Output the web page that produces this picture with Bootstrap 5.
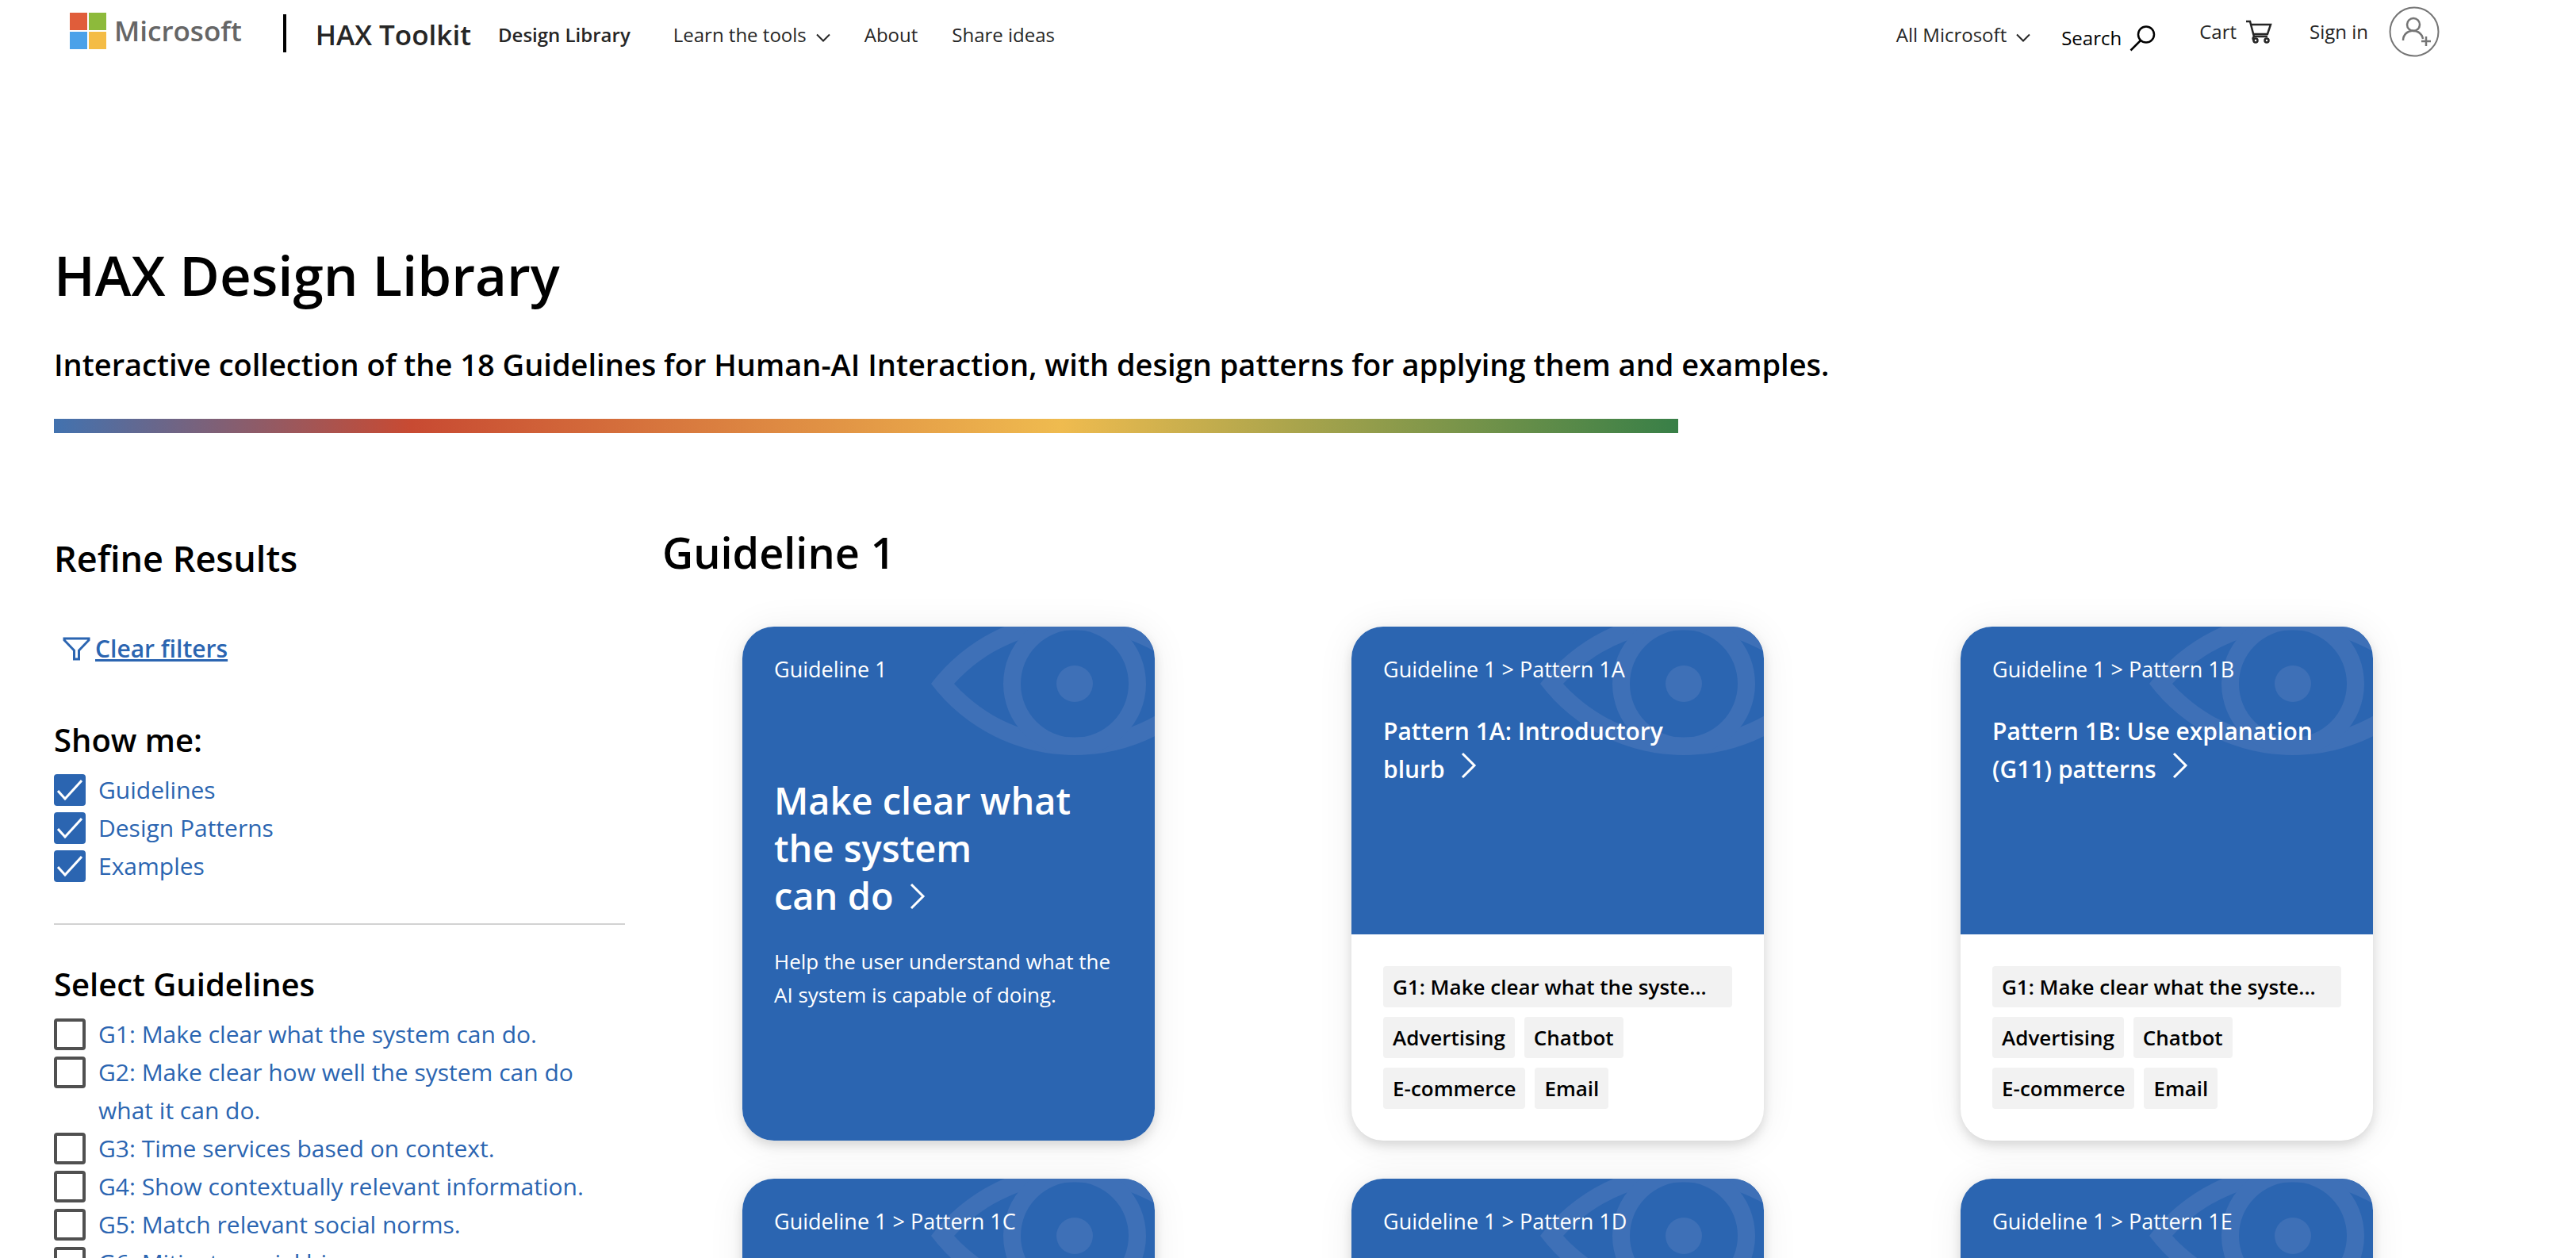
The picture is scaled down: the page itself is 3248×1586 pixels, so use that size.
<!DOCTYPE html>
<html lang="en">
<head>
<meta charset="utf-8">
<meta name="viewport" content="width=device-width, initial-scale=1">
<title>HAX Design Library</title>
<link href="https://cdn.jsdelivr.net/npm/bootstrap@5.3.0/dist/css/bootstrap.min.css" rel="stylesheet">
<style>
  :root { --hax-blue: #2b65b1; }
  html { overflow-x: hidden; }
  body { font-family: "Open Sans", "Noto Sans", sans-serif; font-size: 26px; color: #000; background: #fff; }
  a { color: inherit; text-decoration: none; }
  svg { flex: none; display: block; }
  h1, h2, h3, p { margin: 0; }

  /* header */
  .top-bar { height: 88px; padding: 0 172px 0 88px; color: #262626; font-size: 24px; line-height: 36px; }
  .ms-logo { gap: 10px; padding-bottom: 10px; color: #666; font-size: 35px; font-weight: 600; }
  .bar-rule { width: 4px; height: 48px; margin: 0 37px 4px 52px; background: #000; }
  .site-name { font-size: 35px; font-weight: 600; margin-right: 34px; }
  .main-links { gap: 43px; }
  .main-links .current { font-weight: 600; margin-right: 11px; }
  .search-btn { gap: 10px; margin-left: 39px; padding: 8px 0 0; color: #000; background: none; border: 0; }
  .account-links { gap: 46px; margin-left: 55px; padding-bottom: 8px; }
  .sign-in { gap: 26px; }

  /* intro */
  .page-body { padding: 0 132px 0 68px; }
  .page-title { margin-top: 213px; font-size: 69px; line-height: 90px; font-weight: 600; }
  .page-intro { margin-top: 40px; font-size: 38px; line-height: 56px; font-weight: 600; }
  .rainbow { max-width: 2048px; height: 18px; margin-top: 41px;
    background: linear-gradient(90deg, #4272af 0, #c84a32 22%, #efbb4f 62%, #387f47 100%); }

  /* filters */
  .content-row { margin-top: 114px; gap: 24px; }
  .filters { flex: 0 0 720px; padding-top: 14px; }
  .filters h2 { font-size: 45px; line-height: 60px; font-weight: 600; }
  .filters h3 { font-size: 40px; line-height: 52px; font-weight: 600; margin-bottom: 13px; }
  .clear-link { margin: 64px 0 69px 11px; gap: 6px; font-size: 30px; line-height: 40px; font-weight: 600; color: var(--hax-blue); }
  .filters hr { margin: 48px 0 49px; border-top: 2px solid #d2d2d2; opacity: 1; }
  .filter-row { gap: 16px; color: var(--hax-blue); font-size: 30px; line-height: 48px; }
  .filter-row .form-check-input { flex: none; width: 40px; height: 40px; margin: 4px 0; border: 4px solid #505050; border-radius: 4px; background-color: #fff; }
  .filter-row .form-check-input:checked { border-color: var(--hax-blue); background-color: var(--hax-blue); background-size: 32px 32px;
    background-image: url("data:image/svg+xml,%3csvg xmlns='http://www.w3.org/2000/svg' viewBox='0 0 32 32'%3e%3cpath d='M1 17l9 10L31 4' fill='none' stroke='%23fff' stroke-width='3'/%3e%3c/svg%3e"); }

  /* cards */
  .results > h2 { padding-left: 23px; margin-bottom: 58px; font-size: 54px; line-height: 72px; font-weight: 600; }
  .card-grid { row-gap: 48px; }
  .hax-card { width: 520px; height: 648px; border: 0; border-radius: 40px; overflow: hidden;
    box-shadow: 0 6px 14px rgba(0,0,0,.13), 0 2px 48px rgba(0,0,0,.07); }
  .card-face { position: relative; padding: 36px 40px; color: #fff; background: var(--hax-blue); }
  .pattern-face { height: 388px; }
  .eye-mark { position: absolute; top: 0; right: 0; }
  .crumb { position: relative; font-size: 27px; line-height: 36px; }
  .big-title { margin-top: 117px; font-size: 47px; line-height: 60px; font-weight: 600; }
  .face-text { margin-top: 32px; line-height: 42px; }
  .pattern-title { position: relative; margin-top: 36px; font-size: 30px; line-height: 48px; font-weight: 600; }
  .go-arrow { display: inline; margin-left: 20px; vertical-align: baseline; }
  .pattern-title .go-arrow { vertical-align: -1px; }
  .tag-list { padding: 40px; gap: 12px; }
  .hax-tag { padding: 0 12px; border-radius: 4px; background: #f2f2f2; font-size: 26px; line-height: 52px; font-weight: 600; }
</style>
</head>
<body>
<svg width="0" height="0" class="position-absolute" aria-hidden="true">
  <symbol id="eye" viewBox="0 0 282 162">
    <g fill="#3e70b7" fill-rule="evenodd">
      <path d="M0 72A227 227 0 0 1 362 72A227 227 0 0 1 0 72ZM29 72A205 205 0 0 0 333 72A205 205 0 0 0 29 72Z"/>
      <path d="M91 72a90 90 0 1 0 180 0a90 90 0 1 0 -180 0ZM113 72a68 68 0 1 1 136 0a68 68 0 1 1 -136 0Z"/>
      <circle cx="181" cy="72" r="23"/>
    </g>
  </symbol>
  <symbol id="arrow" viewBox="0 0 20 34"><path d="M2 2l15 15L2 32" fill="none" stroke="currentColor" stroke-width="3"/></symbol>
  <symbol id="down" viewBox="0 0 18 12"><path d="M1 1.500l8 8 8-8" fill="none" stroke="currentColor" stroke-width="2"/></symbol>
</svg>

<header class="top-bar d-flex align-items-center">
  <a href="#" class="ms-logo d-flex align-items-center">
    <svg width="46" height="46" viewBox="0 0 46 46"><path fill="#e05d3a" d="M0 0h22v22H0z"/><path fill="#8dba3b" d="M24 0h22v22H24z"/><path fill="#4aa1e9" d="M0 24h22v22H0z"/><path fill="#f4bc45" d="M24 24h22v22H24z"/></svg>
    Microsoft
  </a>
  <span class="bar-rule"></span>
  <a href="#" class="site-name">HAX Toolkit</a>
  <nav class="main-links d-flex align-items-center">
    <a href="#" class="current">Design Library</a>
    <a href="#" class="d-flex align-items-center gap-2">Learn the tools
      <svg width="18" height="12" class="ms-1 mt-2"><use href="#down"/></svg></a>
    <a href="#">About</a>
    <a href="#">Share ideas</a>
  </nav>
  <a href="#" class="ms-auto d-flex align-items-center gap-2">All Microsoft
    <svg width="18" height="12" class="ms-1 mt-2"><use href="#down"/></svg></a>
  <button type="button" class="search-btn d-flex align-items-center">Search
    <svg width="33" height="33" viewBox="0 0 33 33" fill="none" stroke="currentColor" stroke-width="2.500"><circle cx="21" cy="11.500" r="10"/><path d="M14 19L1.500 31.500"/></svg></button>
  <div class="account-links d-flex align-items-center">
    <a href="#" class="d-flex align-items-center gap-2">Cart
      <svg width="34" height="30" viewBox="0 0 34 30" class="ms-1" fill="none" stroke="currentColor" stroke-width="2.500"><path d="M0 2h5l5 19h17M6 6h25l-4 12H9M11 21c-3 1-3 3-1 5"/><circle cx="12" cy="26" r="2.500"/><circle cx="26" cy="26" r="2.500"/></svg></a>
    <a href="#" class="sign-in d-flex align-items-center">Sign in
      <svg width="64" height="64" viewBox="0 0 64 64" fill="none" stroke="#757575" stroke-width="2"><circle cx="32" cy="32" r="30.500"/><g stroke-width="2.500"><circle cx="31" cy="23" r="8"/><path d="M18 43c0-15 22-17 25-2M47 38v12M41 44h12"/></g></svg></a>
  </div>
</header>

<div class="page-body">
  <h1 class="page-title">HAX Design Library</h1>
  <p class="page-intro">Interactive collection of the 18 Guidelines for Human-AI Interaction, with design patterns for applying them and examples.</p>
  <div class="rainbow"></div>

  <div class="content-row d-flex align-items-start">
    <aside class="filters">
      <h2>Refine Results</h2>
      <a href="#" class="clear-link d-flex align-items-center">
        <svg width="35" height="30" viewBox="0 0 35 30" fill="none" stroke="currentColor" stroke-width="3"><path d="M2 2h31v2L20.500 17v11h-6V17L2 4z"/></svg>
        <span class="text-decoration-underline">Clear filters</span></a>
      <h3>Show me:</h3>
      <div class="filter-row d-flex"><input class="form-check-input" type="checkbox" id="s1" checked><label for="s1">Guidelines</label></div>
      <div class="filter-row d-flex"><input class="form-check-input" type="checkbox" id="s2" checked><label for="s2">Design Patterns</label></div>
      <div class="filter-row d-flex"><input class="form-check-input" type="checkbox" id="s3" checked><label for="s3">Examples</label></div>
      <hr>
      <h3>Select Guidelines</h3>
      <div class="filter-row d-flex"><input class="form-check-input" type="checkbox" id="g1"><label for="g1">G1: Make clear what the system can do.</label></div>
      <div class="filter-row d-flex"><input class="form-check-input" type="checkbox" id="g2"><label for="g2">G2: Make clear how well the system can do what it can do.</label></div>
      <div class="filter-row d-flex"><input class="form-check-input" type="checkbox" id="g3"><label for="g3">G3: Time services based on context.</label></div>
      <div class="filter-row d-flex"><input class="form-check-input" type="checkbox" id="g4"><label for="g4">G4: Show contextually relevant information.</label></div>
      <div class="filter-row d-flex"><input class="form-check-input" type="checkbox" id="g5"><label for="g5">G5: Match relevant social norms.</label></div>
      <div class="filter-row d-flex"><input class="form-check-input" type="checkbox" id="g6"><label for="g6">G6: Mitigate social biases.</label></div>
    </aside>

    <main class="results flex-grow-1">
      <h2>Guideline 1</h2>
      <div class="card-grid row g-0">
        <div class="col-4 d-flex justify-content-center">
          <article class="card hax-card">
            <div class="card-face h-100">
              <svg class="eye-mark" width="282" height="162"><use href="#eye"/></svg>
              <p class="crumb">Guideline 1</p>
              <h3 class="big-title"><a href="#">Make clear what the system <span class="text-nowrap">can do<svg class="go-arrow" width="20" height="34"><use href="#arrow"/></svg></span></a></h3>
              <p class="face-text">Help the user understand what the AI system is capable of doing.</p>
            </div>
          </article>
        </div>
        <div class="col-4 d-flex justify-content-center">
          <article class="card hax-card">
            <div class="card-face pattern-face">
              <svg class="eye-mark" width="282" height="162"><use href="#eye"/></svg>
              <p class="crumb">Guideline 1 &gt; Pattern 1A</p>
              <h3 class="pattern-title"><a href="#">Pattern 1A: Introductory <span class="text-nowrap">blurb<svg class="go-arrow" width="20" height="34"><use href="#arrow"/></svg></span></a></h3>
            </div>
            <div class="tag-list d-flex flex-wrap">
              <span class="hax-tag w-100">G1: Make clear what the syste...</span>
              <span class="hax-tag">Advertising</span><span class="hax-tag">Chatbot</span>
              <span class="hax-tag">E-commerce</span><span class="hax-tag">Email</span>
            </div>
          </article>
        </div>
        <div class="col-4 d-flex justify-content-center">
          <article class="card hax-card">
            <div class="card-face pattern-face">
              <svg class="eye-mark" width="282" height="162"><use href="#eye"/></svg>
              <p class="crumb">Guideline 1 &gt; Pattern 1B</p>
              <h3 class="pattern-title"><a href="#">Pattern 1B: Use explanation <span class="text-nowrap">(G11) patterns<svg class="go-arrow" width="20" height="34"><use href="#arrow"/></svg></span></a></h3>
            </div>
            <div class="tag-list d-flex flex-wrap">
              <span class="hax-tag w-100">G1: Make clear what the syste...</span>
              <span class="hax-tag">Advertising</span><span class="hax-tag">Chatbot</span>
              <span class="hax-tag">E-commerce</span><span class="hax-tag">Email</span>
            </div>
          </article>
        </div>
        <div class="col-4 d-flex justify-content-center">
          <article class="card hax-card"><div class="card-face pattern-face">
            <svg class="eye-mark" width="282" height="162"><use href="#eye"/></svg>
            <p class="crumb">Guideline 1 &gt; Pattern 1C</p></div></article>
        </div>
        <div class="col-4 d-flex justify-content-center">
          <article class="card hax-card"><div class="card-face pattern-face">
            <svg class="eye-mark" width="282" height="162"><use href="#eye"/></svg>
            <p class="crumb">Guideline 1 &gt; Pattern 1D</p></div></article>
        </div>
        <div class="col-4 d-flex justify-content-center">
          <article class="card hax-card"><div class="card-face pattern-face">
            <svg class="eye-mark" width="282" height="162"><use href="#eye"/></svg>
            <p class="crumb">Guideline 1 &gt; Pattern 1E</p></div></article>
        </div>
      </div>
    </main>
  </div>
</div>
<script src="https://cdn.jsdelivr.net/npm/bootstrap@5.3.0/dist/js/bootstrap.bundle.min.js"></script>
</body>
</html>
